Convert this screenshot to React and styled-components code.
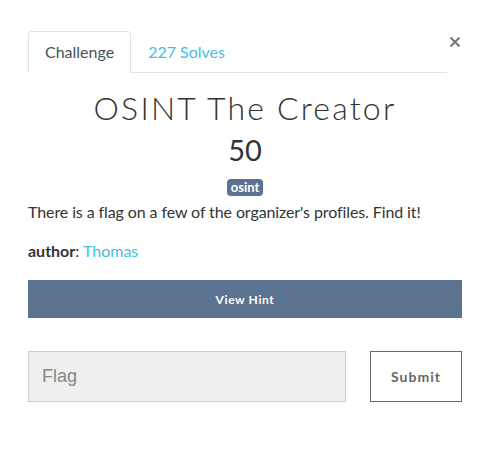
import React from 'react'
import styled, { createGlobalStyle } from 'styled-components'

const Global = createGlobalStyle`
  body {
    margin: 0;
    background: #fff;
    font-family: Lato, "Open Sans", sans-serif;
    color: #212529;
  }
`

const Modal = styled.div`
  width: 492px;
  height: 449px;
  box-sizing: border-box;
  padding: 31px 30px 0 28px;
`

const Header = styled.div`
  display: flex;
  align-items: flex-start;
`

const Tabs = styled.nav`
  flex: 1;
  display: flex;
  border-bottom: 1px solid #dee2e6;
`

const Tab = styled.div`
  padding: 10px 16px 11px;
  font-size: 16px;
  line-height: 19px;
  margin-bottom: -1px;
  border: 1px solid ${p => (p.$active ? '#dee2e6' : 'transparent')};
  border-bottom-color: ${p => (p.$active ? '#fff' : 'transparent')};
  border-radius: 4px 4px 0 0;
  color: ${p => (p.$active ? '#495057' : '#44c0e0')};
  background: ${p => (p.$active ? '#fff' : 'transparent')};
`

const Close = styled.button`
  border: 0;
  background: none;
  padding: 0;
  margin: 4px 0 0 1px;
  width: 14px;
  height: 14px;
  display: flex;
  align-items: center;
  justify-content: center;
`

const Body = styled.div`
  display: flex;
  flex-direction: column;
`

const Title = styled.h1`
  margin: 15px 0 0;
  text-align: center;
  font-weight: 300;
  font-size: 32px;
  line-height: 40px;
  letter-spacing: 2.2px;
  color: #333;
`

const Points = styled.div`
  margin-top: 4px;
  text-align: center;
  font-size: 29px;
  line-height: 36px;
  color: #333;
`

const BadgeRow = styled.div`
  display: flex;
  justify-content: center;
  margin-top: 11px;
`

const Badge = styled.span`
  background: #5b7290;
  color: #fff;
  font-weight: 700;
  font-size: 13px;
  line-height: 17px;
  padding: 0 4px;
  border-radius: 4px;
`

const Desc = styled.p`
  margin: 4px 0 0;
  font-size: 16px;
  line-height: 24px;
  letter-spacing: -0.1px;
  color: #333;
`

const Author = styled.p`
  margin: 15px 0 0;
  font-size: 16px;
  line-height: 24px;
  color: #333;

  b { font-weight: 700; }
  a { color: #44c0e0; text-decoration: none; }
`

const HintButton = styled.button`
  margin-top: 17px;
  height: 38px;
  border: 0;
  background: #5b7290;
  color: #fff;
  font-family: Lato, sans-serif;
  font-weight: 700;
  font-size: 12px;
  letter-spacing: 0.6px;
`

const SubmitRow = styled.div`
  display: flex;
  justify-content: space-between;
  margin-top: 33px;
`

const FlagInput = styled.input`
  box-sizing: border-box;
  width: 318px;
  height: 51px;
  border: 1px solid #ccc;
  background: #efefef;
  padding: 0 13px;
  font-family: "Liberation Sans", Arial, sans-serif;
  font-size: 18px;
  color: #333;
  outline: none;

  &::placeholder { color: #888; }
`

const SubmitButton = styled.button`
  box-sizing: border-box;
  width: 92px;
  height: 51px;
  border: 1px solid #6c6c6c;
  background: #fff;
  color: #666;
  font-family: Lato, sans-serif;
  font-weight: 700;
  font-size: 14px;
  letter-spacing: 1px;
`

export default function App() {
  return (
    <>
      <Global />
      <Modal>
        <Header>
          <Tabs>
            <Tab $active>Challenge</Tab>
            <Tab>227 Solves</Tab>
          </Tabs>
          <Close aria-label="close">
            <svg width="12" height="12" viewBox="0 0 12 12">
              <path d="M1.5 1.5 L10.5 10.5 M10.5 1.5 L1.5 10.5" stroke="#777" strokeWidth="2" />
            </svg>
          </Close>
        </Header>
        <Body>
          <Title>OSINT The Creator</Title>
          <Points>50</Points>
          <BadgeRow>
            <Badge>osint</Badge>
          </BadgeRow>
          <Desc>There is a flag on a few of the organizer's profiles. Find it!</Desc>
          <Author>
            <b>author</b>: <a href="#">Thomas</a>
          </Author>
          <HintButton>View Hint</HintButton>
          <SubmitRow>
            <FlagInput placeholder="Flag" />
            <SubmitButton>Submit</SubmitButton>
          </SubmitRow>
        </Body>
      </Modal>
    </>
  )
}
